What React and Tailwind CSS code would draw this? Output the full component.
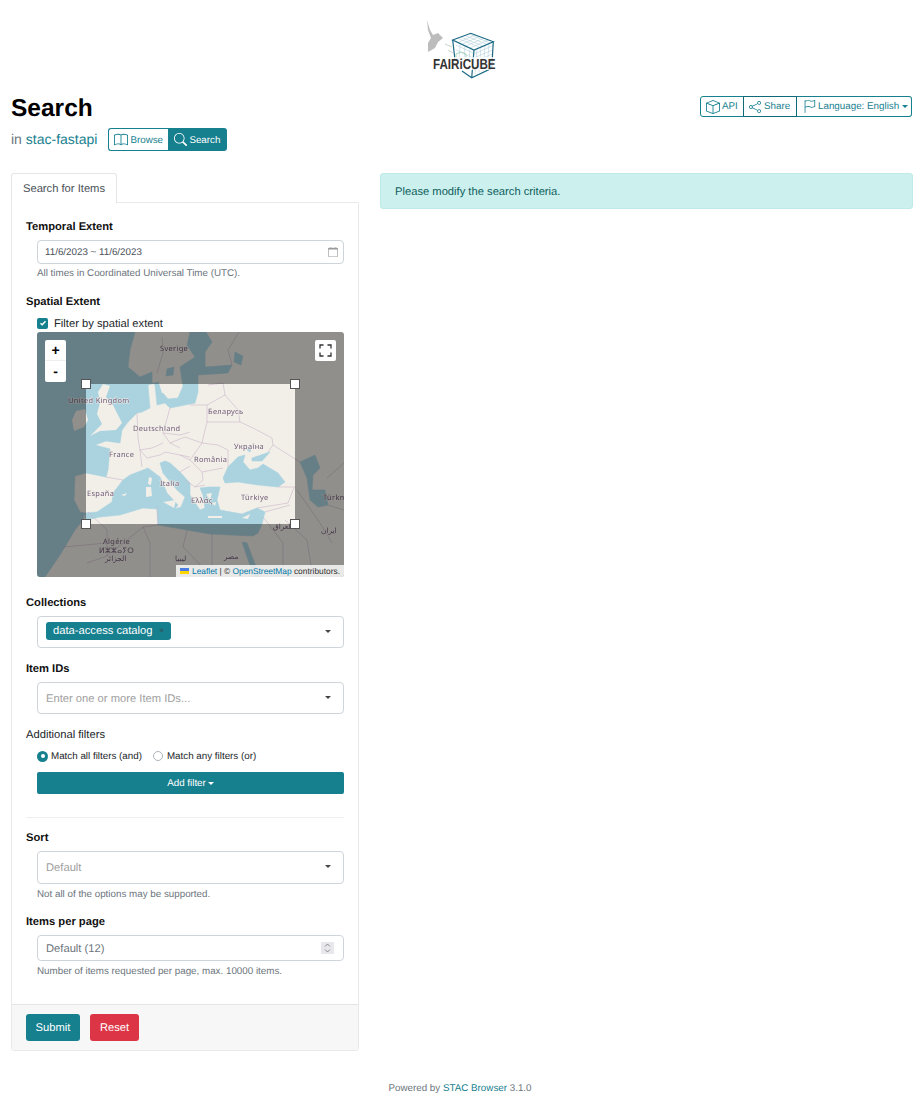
import React from 'react';
import { BsBook, BsSearch, BsBox, BsShare, BsFlag, BsCalendar } from 'react-icons/bs';

const FONT = "font-['Liberation_Sans',Arial,sans-serif]";

// drawn in page pixels, so the numbers can be read straight off the screenshot
const Logo = () => (
  <svg width="72" height="64" viewBox="425 18 72 64" className="block">
    <path d="M427 20 L430 30 L433 35 L438 33 L443 38 L438 42 L435 48 L428 52 L428 43 L431 38 L428 30 Z" fill="#bcbcbc" />
    <path d="M445 44 L452 47 M448 50 L453 53" stroke="#c9d8c9" strokeWidth="1" />
    <g fill="none" stroke="#a9c8d6" strokeWidth="0.5">
      <path d="M457 38 L479 47 M461 37 L483 46 M465 35.500 L487 44.500 M469 34 L490 43" />
      <path d="M458 42.500 L476 34.500 M462 44.500 L480 36 M466 46 L484 38 M470 48 L488 40" />
      <path d="M477 48.500 L475 74 M481 46.500 L479 72.500 M485 45 L483 71 M489 43.500 L487 69.500" />
      <path d="M474 54 L493 45.500 M473.700 58 L492.700 50 M473.300 62 L492.400 54 M473 66 L492 58.500 M472.500 70 L491.900 63" />
      <path d="M456 45 L473 53 M456 50 L473 58 M460 44 L459 60 M465 46 L464 60 M470 49 L469 60" />
    </g>
    <g fill="none" stroke="#1c6a85" strokeWidth="1.200">
      <path d="M452.700 40 L470.700 33.300 L493.300 41.700 L474 50 Z" />
      <path d="M452.700 40 L455 60 M474 50 L471.700 77.700 M493.300 41.700 L491.700 68.300 L471.700 77.700 L462 71" />
    </g>
    <path d="M456 54 L461 52 L466 54 L466 58 L461 60 L456 58 Z" fill="none" stroke="#9fd0b4" strokeWidth="0.9" />
    <rect x="432" y="57" width="63" height="13" fill="#fff" fillOpacity="0.75" />
    <text transform="translate(433 69.300) scale(0.8 1)" fill="#333" fontFamily="'Liberation Sans',Arial,sans-serif" fontWeight="700" fontSize="14.500">FAIRiCUBE</text>
  </svg>
);

const MapLabel = ({ x, y, children, size = 7.4 }) => (
  <text x={x} y={y} fontSize={size} fill="#6f5a78" stroke="#f2efe9" strokeOpacity="0.8" strokeWidth="1.2" paintOrder="stroke" fontFamily="'Noto Sans','DejaVu Sans',sans-serif" letterSpacing="0.35">{children}</text>
);

const MapArt = () => (
  <svg viewBox="37 332 307 245" className="block w-full h-full">
    <g className="blur-[0.35px]">
      <rect x="37" y="332" width="307" height="245" fill="#f2efe9" />
      <g fill="#aad3df" stroke="#aad3df" strokeWidth="0.6" strokeLinejoin="round">
        {/* atlantic, north sea, baltic */}
        <path d="M37 332 L135 332 L130 350 L128 367 L140 377 L152 372 L152 382 L155 385 L157 405 L165 403 L170 408 L185 405 L195 403 L198 392 L198 375 L228 373 L232 365 L205 367 L205 352 L212 342 L206 332 L190 332 L187 345 L195 357 L180 367 L183 386 L178 398 L168 399 L162 392 L158 382 L148 385 L150 408 L142 412 L137 413 L128 422 L122 430 L120 443 L106 441 L95 445 L110 449 L108 470 L106 477 L86 473 L75 476 L74 500 L80 512 L85 513 L83 520 L75 530 L60 555 L45 577 L37 577 Z" />
        {/* mediterranean */}
        <path d="M85 513 L97 512 L112 502 L113 493 L123 480 L130 475 L143 470 L148 468 L160 477 L167 493 L178 505 L175 509 L181 507 L185 497 L177 490 L163 473 L160 463 L165 461 L170 463 L180 472 L190 483 L190 495 L200 510 L205 508 L203 495 L200 488 L208 487 L220 487 L217 500 L220 510 L242 514 L257 508 L265 512 L262 524 L258 533 L253 536 L210 534 L187 530 L158 525 L157 509 L143 508 L120 515 L100 517 L86 520 Z" />
        {/* black sea, azov */}
        <path d="M223 478 L228 467 L238 457 L245 455 L243 462 L250 470 L258 468 L263 464 L278 473 L285 482 L278 487 L258 485 L238 482 L225 483 Z" />
        <path d="M252 458 L270 452 L262 461 L252 461 Z" />
        {/* caspian */}
        <path d="M300 462 L315 455 L320 468 L313 475 L312 490 L325 490 L328 505 L318 507 L310 500 L307 478 Z" />
        {/* red sea, lakes */}
        <path d="M242 542 L247 543 L260 577 L254 577 Z" />
        <path d="M235 352 L243 356 L241 365 L234 362 Z" />
        <path d="M167 369 L174 367 L173 375 L166 376 Z" />
        <path d="M247 450 L252 446 L250 452 Z" />
      </g>
      <g fill="#f2efe9">
        <path d="M103 384 L110 386 L106 397 L113 405 L118 415 L122 423 L116 430 L100 431 L90 436 L102 424 L97 414 L100 402 L98 392 Z" />
        <path d="M76 411 L85 409 L88 420 L84 427 L74 431 L72 420 Z" />
        <path d="M149 477 L152 478 L151 485 L148 484 Z" />
        <path d="M146 487 L151 487 L152 496 L146 497 Z" />
        <path d="M163 502 L176 500 L174 508 Z" />
        <path d="M208 516 L222 516 L222 518 L208 518 Z" />
        <path d="M242 518 L250 514 L248 519 Z" />
        <path d="M121 495 L127 493 L125 496 Z" />
        <path d="M206 494 L212 493 L210 500 Z" />
        <path d="M212 503 L216 502 L215 506 Z" />
        <path d="M160 386 L166 384 L168 392 L162 393 Z" />
      </g>
      <g fill="none" stroke="#c9b6c9" strokeWidth="0.600">
        <path d="M137 413 L138 438 L140 450 L142 467 M170 408 L163 433 L170 443 L180 448 M140 450 L152 448 L163 443" />
        <path d="M140 450 L147 458 L160 455 L165 452 L180 455 L190 457 M106 477 L123 480 M163 433 L180 435 L190 432 M170 443 L185 437 L202 443" />
        <path d="M207 422 L205 430 L202 443 M208 385 L223 383 L225 395 L207 405 L207 422 M190 405 L207 405 M225 395 L238 410 L240 422 M207 422 L240 422" />
        <path d="M240 422 L253 428 L272 438 L273 445 L268 452 M202 443 L218 445 L228 450 L228 467" />
        <path d="M202 443 L190 460 L202 472 L223 468 M190 460 L180 455 M202 472 L203 480 L195 487 M185 480 L195 487 L205 485 M180 472 L190 466" />
        <path d="M278 487 L295 487 L293 490 L288 503 L257 508 M265 512 L290 505" />
        <path d="M157 507 L158 525 L143 527 L107 556 L87 563 M143 527 L150 543 L150 577 M212 533 L212 577 M187 530 L183 547 L212 577 M88 512 L107 530 L107 556 M63 547 L107 543" />
        <path d="M285 520 L307 540 L313 577 M297 490 L320 523 L332 543 M328 505 L344 510 M327 478 L344 463 M263 517 L283 543 L283 577 M273 445 L300 462 M162 337 L163 353 L157 373 M239 332 L228 350 L232 365" />
      </g>
      <g>
        <MapLabel x="160" y="351">Sverige</MapLabel>
        <MapLabel x="68" y="403">United Kingdom</MapLabel>
        <MapLabel x="208" y="414">Беларусь</MapLabel>
        <MapLabel x="133" y="431">Deutschland</MapLabel>
        <MapLabel x="234" y="449">Україна</MapLabel>
        <MapLabel x="109" y="457">France</MapLabel>
        <MapLabel x="194" y="462">România</MapLabel>
        <MapLabel x="160" y="486">Italia</MapLabel>
        <MapLabel x="87" y="496">España</MapLabel>
        <MapLabel x="191" y="503">Ελλάς</MapLabel>
        <MapLabel x="241" y="500">Türkiye</MapLabel>
        <MapLabel x="323" y="500">Türkm</MapLabel>
        <MapLabel x="103" y="544">Algérie</MapLabel>
        <MapLabel x="99" y="553">ⵍⵣⵣⴰⵢⵔ</MapLabel>
        <MapLabel x="105" y="561">الجزائر</MapLabel>
        <MapLabel x="175" y="561">ليبيا</MapLabel>
        <MapLabel x="224" y="559">مصر</MapLabel>
        <MapLabel x="273" y="529">العراق</MapLabel>
        <MapLabel x="321" y="533">ایران</MapLabel>
      </g>
    </g>
    <path fillRule="evenodd" d="M37 332 H344 V577 H37 Z M86 384 V524 H295 V384 Z" fill="#000" fillOpacity="0.4" />
  </svg>
);

const Handle = ({ className }) => (
  <span className={`absolute w-[10px] h-[10px] bg-white border border-[#555] ${className}`} />
);

// box stays 16px, the taller line height sets the text 1px lower
const Label = ({ className = '', children }) => (
  <div className={`h-[16px] text-[11.2px] leading-[18px] font-bold text-[#111] ${className}`}>{children}</div>
);

const Help = ({ className = '', children }) => (
  <div className={`h-[16px] text-[9.8px] leading-[18px] text-[#6c757d] ml-[11px] ${className}`}>{children}</div>
);

const Caret = ({ className = '' }) => (
  <span className={`inline-block w-0 h-0 border-x-[3px] border-x-transparent border-t-[3px] border-t-[#444] ${className}`} />
);

const SelectBox = ({ className = '', children }) => (
  <div className={`ml-[11px] flex items-center justify-between border border-[#ced4da] rounded-[4px] bg-white pl-[8px] pr-[12px] ${className}`}>
    {children}
  </div>
);

export default function App() {
  return (
    <div className={`${FONT} [text-rendering:geometricPrecision] w-[920px] h-[1103px] bg-white text-[#212529] overflow-hidden`}>
      <div className="h-[88px] flex justify-center pt-[18px] pl-[2px]">
        <Logo />
      </div>

      <div className="pl-[11px] pr-[8px] flex justify-between items-start">
        <div>
          <h1 className="h-[40px] text-[24.5px] leading-[42px] font-bold text-black">Search</h1>
          <div className="flex items-center h-[23px]">
            <span className="text-[14px] text-[#6c757d]">in <span className="text-[#17808f]">stac-fastapi</span></span>
            <div className="ml-[11px] flex h-[23px] text-[9.8px]">
              <span className="flex items-center gap-[2px] w-[60px] pl-[5px] border border-[#17808f] border-r-0 rounded-l-[3px] text-[#17808f]">
                <BsBook size={14} /> <span className="pt-[3px]">Browse</span>
              </span>
              <span className="flex items-center gap-[2px] w-[59px] pl-[6px] bg-[#17808f] rounded-r-[3px] text-white">
                <BsSearch size={13} /> <span className="pt-[3px]">Search</span>
              </span>
            </div>
          </div>
        </div>
        <div className="flex h-[21px] mt-[8px] text-[9.8px] text-[#17808f]">
          <span className="flex items-center gap-[2px] w-[44px] pl-[5px] border border-[#17808f] rounded-l-[3px]">
            <BsBox size={14} /> <span className="pt-[2px]">API</span>
          </span>
          <span className="flex items-center gap-[3px] w-[54px] pl-[5px] -ml-px border border-[#0f6a77]">
            <BsShare size={12} /> <span className="pt-[2px]">Share</span>
          </span>
          <span className="flex items-center gap-[2px] w-[115px] pl-[6px] border border-l-0 border-[#17808f] rounded-r-[3px]">
            <BsFlag size={13} /> <span className="pt-[2px]">Language: English</span> <Caret className="border-x-[2px] border-t-[2px] border-t-[#17808f] ml-[1px]" />
          </span>
        </div>
      </div>

      <div className="pl-[11px] pr-[7px] mt-[22px] flex gap-[21px] items-start">
        <div className="w-[348px] shrink-0">
          <div className="w-[106px] h-[30px] flex items-center justify-center border border-[#e6e6e6] border-b-0 rounded-t-[3px] text-[11.2px] text-[#495057] bg-white relative z-10">
            <span className="pt-[2px]">Search for Items</span>
          </div>
          <div className="border border-[#e9e9e9] rounded-b-[3px] -mt-px">
            <div className="px-[14px] pt-[15px]">
              <Label>Temporal Extent</Label>
              <div className="mt-[6px] ml-[11px] h-[24px] flex items-center justify-between border border-[#ced4da] rounded-[4px] pl-[7px] pr-[5px] text-[9.8px] text-[#495057]">
                <span className="pt-[2px]">11/6/2023 ~ 11/6/2023</span>
                <BsCalendar size={10} className="text-[#999]" />
              </div>
              <Help className="mt-[1px]">All times in Coordinated Universal Time (UTC).</Help>

              <Label className="mt-[12px]">Spatial Extent</Label>
              <div className="mt-[6px] ml-[11px] h-[16px] flex items-center gap-[6px] text-[11.2px] text-[#212529]">
                <span className="w-[11px] h-[11px] rounded-[2px] bg-[#17808f] flex items-center justify-center">
                  <svg width="8" height="8" viewBox="0 0 8 8"><path d="M1.500 4.200 L3.200 5.800 L6.500 2.200" fill="none" stroke="#fff" strokeWidth="1.400" /></svg>
                </span>
                <span className="pt-[2px]">Filter by spatial extent</span>
              </div>

              <div className="mt-[1px] ml-[11px] w-[307px] h-[245px] relative rounded-[3px] overflow-hidden">
                <MapArt />
                <Handle className="left-[44px] top-[47px]" />
                <Handle className="left-[253px] top-[47px]" />
                <Handle className="left-[44px] top-[187px]" />
                <Handle className="left-[253px] top-[187px]" />
                <div className="absolute left-[8px] top-[8px] w-[21px] h-[42px] bg-white rounded-[2px] flex flex-col text-black font-bold text-[14px] leading-[21px] text-center">
                  <span className="h-[21px] border-b border-[#eee]">+</span>
                  <span className="h-[21px]">-</span>
                </div>
                <div className="absolute right-[8px] top-[8px] w-[21px] h-[21px] bg-white rounded-[2px] flex items-center justify-center">
                  <svg width="13" height="13" viewBox="0 0 13 13" fill="none" stroke="#333" strokeWidth="1.300">
                    <path d="M1 4.500 V1 H4.500 M8.500 1 H12 V4.500 M12 8.500 V12 H8.500 M4.500 12 H1 V8.500" />
                  </svg>
                </div>
                <div className="absolute right-0 bottom-0 h-[12px] pl-[4px] pr-[4px] bg-white/80 flex items-center gap-[3px] text-[8.4px] leading-[12px] text-[#333] whitespace-pre">
                  <svg width="9" height="6" viewBox="0 0 9 6"><rect width="9" height="3" fill="#4C7BE1" /><rect y="3" width="9" height="3" fill="#FFD500" /></svg>
                  <span><span className="text-[#0078a8]">Leaflet</span> | © <span className="text-[#0078a8]">OpenStreetMap</span> contributors.</span>
                </div>
              </div>

              <Label className="mt-[17px]">Collections</Label>
              <SelectBox className="mt-[6px] h-[32px]">
                <span className="h-[18px] -mt-[3px] w-[125px] flex items-center justify-between bg-[#17808f] rounded-[3px] pl-[7px] pr-[7px] text-white text-[11.2px]">
                  <span className="pt-[2px]">data-access catalog</span>
                  <span className="text-[#2b5b60] text-[8px] font-bold">×</span>
                </span>
                <Caret className="-mt-[2px]" />
              </SelectBox>

              <Label className="mt-[12px]">Item IDs</Label>
              <SelectBox className="mt-[6px] h-[32px]">
                <span className="text-[11.2px] text-[#a0a0a0] pt-[2px]">Enter one or more Item IDs...</span>
                <Caret className="-mt-[2px]" />
              </SelectBox>

              <div className="mt-[12px] h-[16px] text-[11.2px] leading-[18px] text-[#212529]">Additional filters</div>
              <div className="mt-[6px] ml-[11px] h-[16px] flex items-center text-[9.8px] text-[#212529]">
                <span className="w-[11px] h-[11px] rounded-full bg-[#17808f] flex items-center justify-center">
                  <span className="w-[4px] h-[4px] rounded-full bg-white" />
                </span>
                <span className="ml-[3px] pt-[2px]">Match all filters (and)</span>
                <span className="ml-[11px] w-[10px] h-[10px] rounded-full border border-[#adb5bd]" />
                <span className="ml-[4px] pt-[2px]">Match any filters (or)</span>
              </div>
              <div className="mt-[8px] ml-[11px] h-[22px] rounded-[2px] bg-[#17808f] text-white text-[9.8px] flex items-center justify-center gap-[2px]">
                <span className="pt-[2px]">Add filter</span> <Caret className="border-x-[2px] border-t-[2px] border-t-white" />
              </div>

              <div className="mt-[23px] border-t border-[#eceeef]" />

              <Label className="mt-[11px]">Sort</Label>
              <SelectBox className="mt-[6px] h-[33px]">
                <span className="text-[11.2px] text-[#a0a0a0] pt-[2px]">Default</span>
                <Caret className="-mt-[3px]" />
              </SelectBox>
              <Help className="mt-[2px]">Not all of the options may be supported.</Help>

              <Label className="mt-[11px]">Items per page</Label>
              <div className="mt-[6px] ml-[11px] h-[26px] flex items-center justify-between border border-[#ced4da] rounded-[4px] pl-[8px] pr-[9px] text-[11.2px] text-[#6c757d]">
                <span className="pt-[2px]">Default (12)</span>
                <span className="w-[13px] h-[12px] bg-[#e8e8ec] flex items-center justify-center">
                  <svg width="7" height="10" viewBox="0 0 7 10" fill="none" stroke="#777" strokeWidth="0.800"><path d="M1 3.500 L3.500 1 L6 3.500 M1 6.500 L3.500 9 L6 6.500" /></svg>
                </span>
              </div>
              <Help className="mt-[2px]">Number of items requested per page, max. 10000 items.</Help>
            </div>

            <div className="mt-[25px] h-[46px] bg-[#f7f7f7] border-t border-[#e4e4e4] pl-[14px] pt-[9px] flex gap-[10px] rounded-b-[3px]">
              <span className="w-[54px] h-[27px] pt-[2px] rounded-[3px] bg-[#17808f] text-white text-[11.2px] flex items-center justify-center">Submit</span>
              <span className="w-[49px] h-[27px] pt-[2px] rounded-[3px] bg-[#dc3545] text-white text-[11.2px] flex items-center justify-center">Reset</span>
            </div>
          </div>
        </div>

        <div className="flex-1 h-[36px] rounded-[3px] bg-[#ccf0ee] border border-[#bfeae7] flex items-center pl-[14px] text-[11.2px] text-[#0e5f5c]">
          <span className="pt-[2px]">Please modify the search criteria.</span>
        </div>
      </div>

      <div className="mt-[29px] h-[16px] text-center text-[9.8px] leading-[18px] text-[#6c757d]">
        Powered by <span className="text-[#17808f]">STAC Browser</span> 3.1.0
      </div>
    </div>
  );
}
